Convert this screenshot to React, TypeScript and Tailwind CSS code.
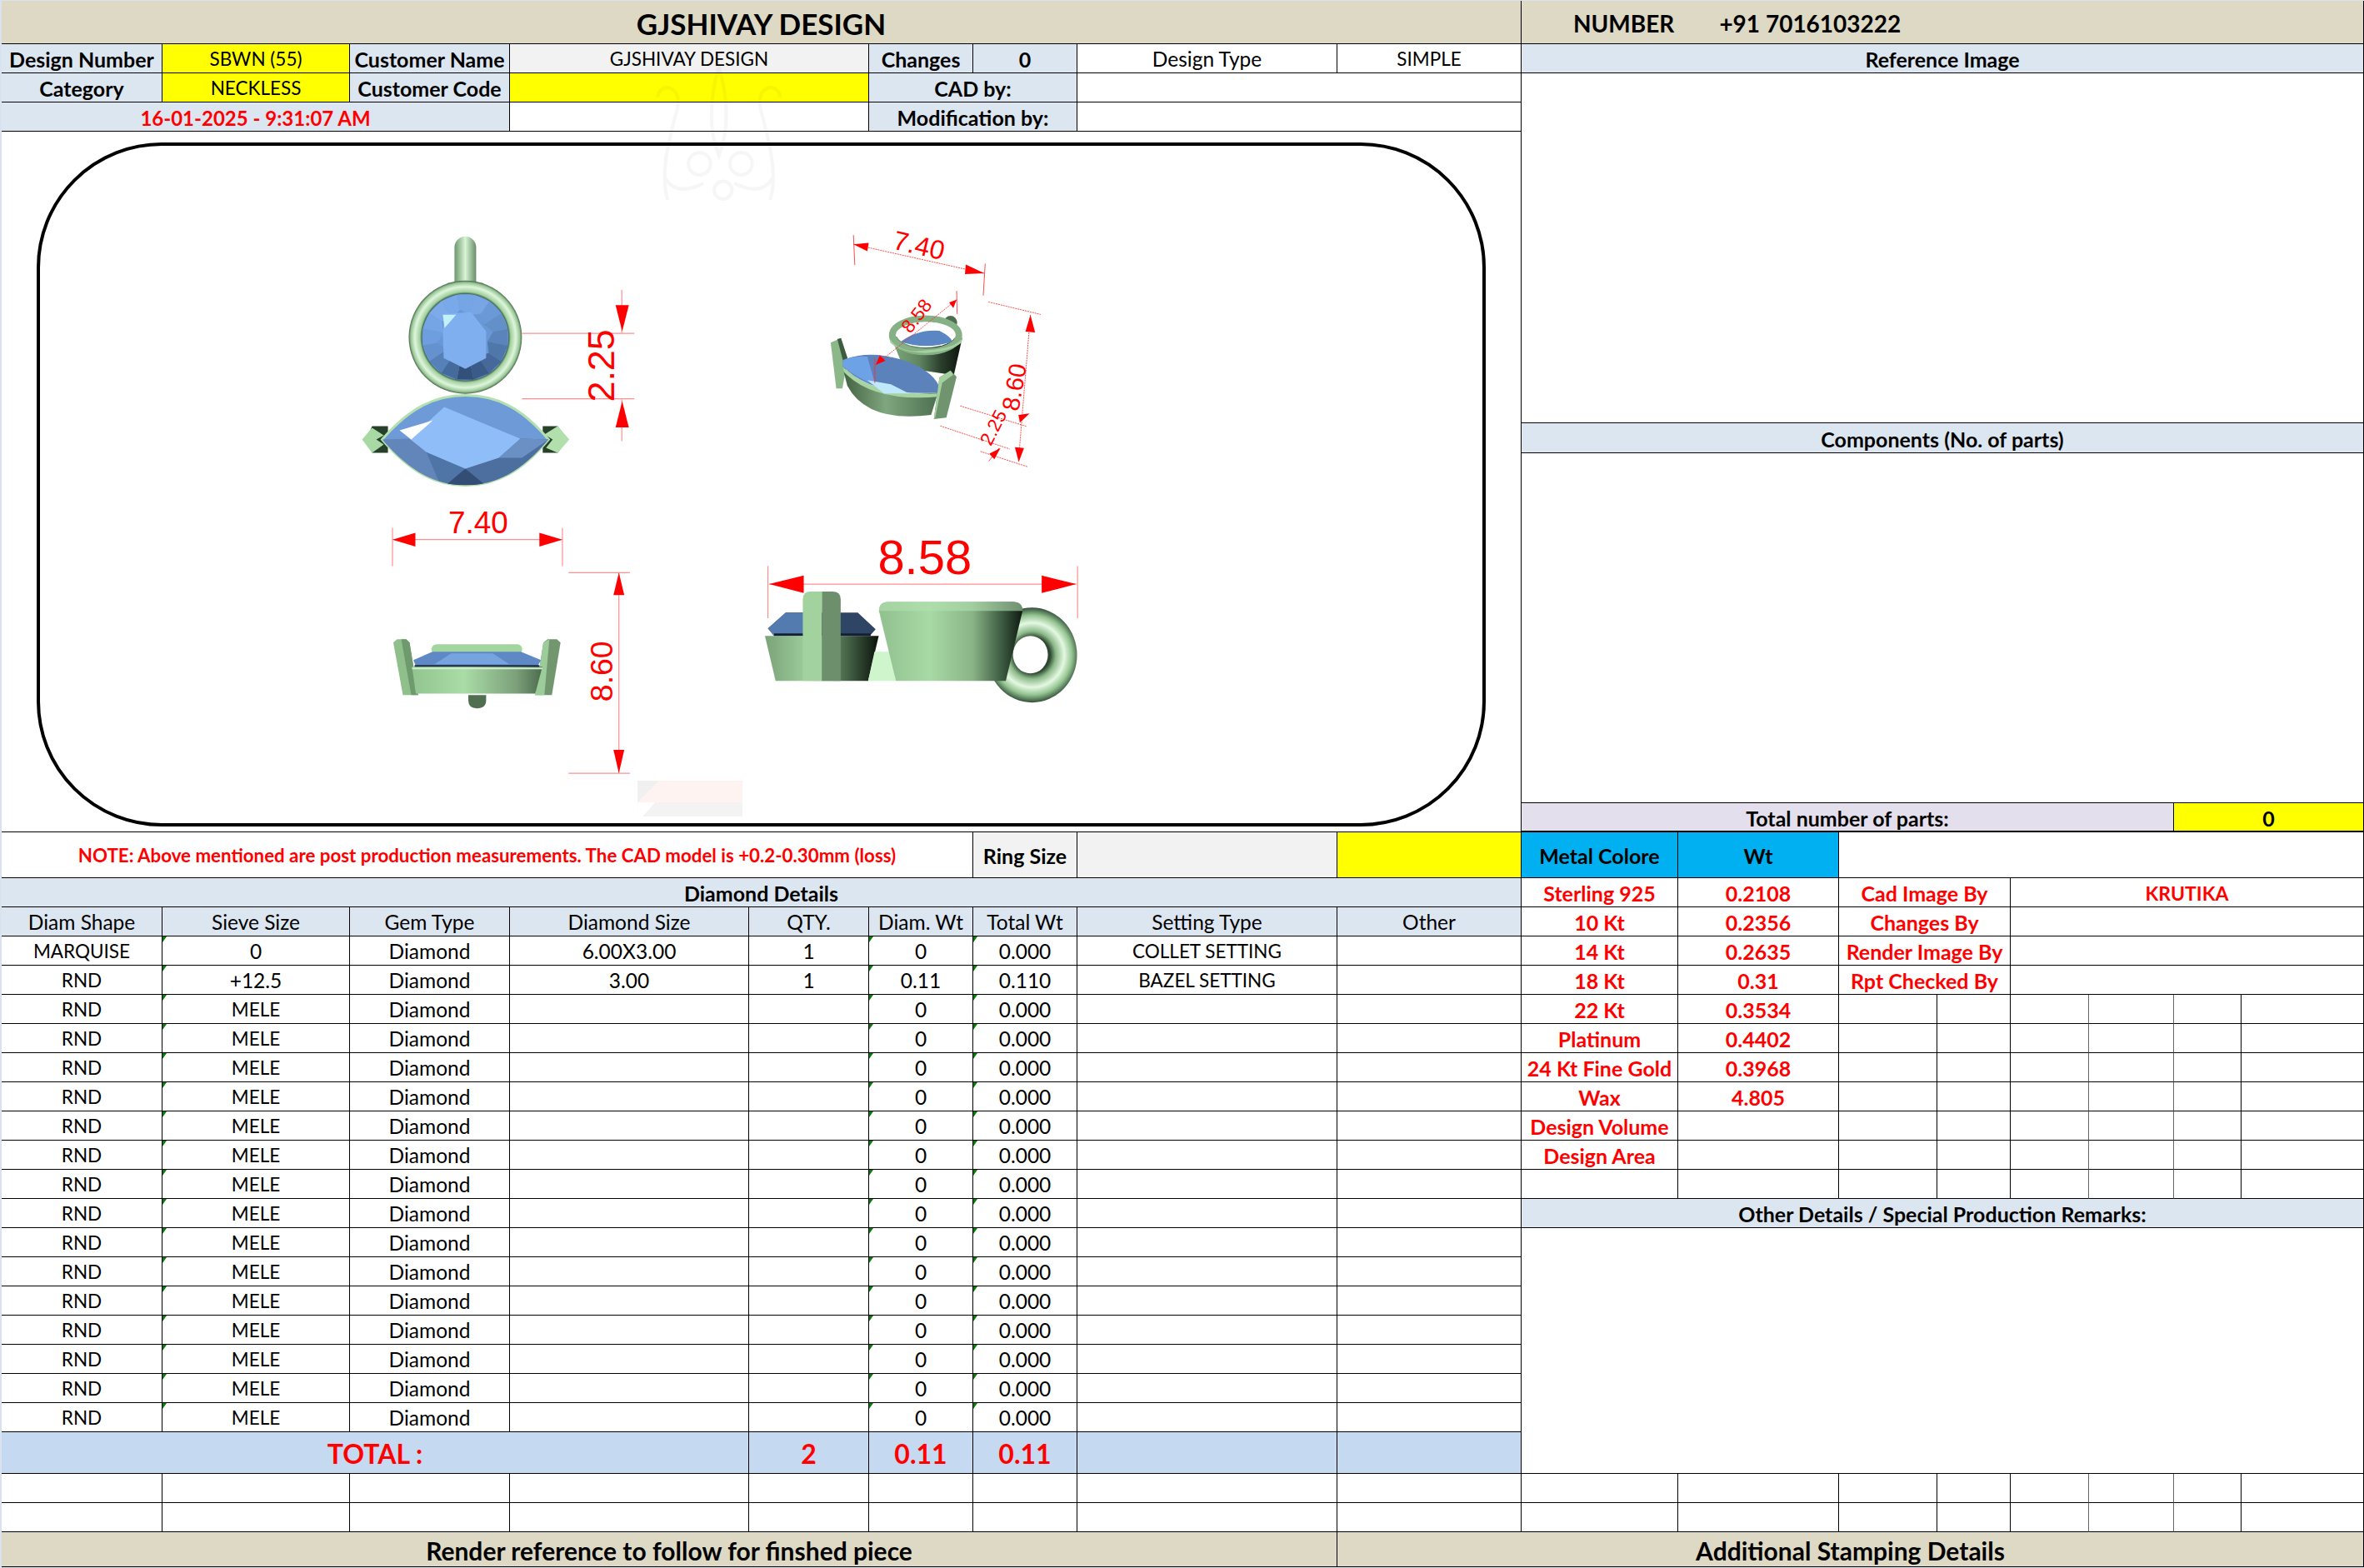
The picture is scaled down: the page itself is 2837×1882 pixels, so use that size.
import React from "react";

const BLUE = "bg-[#dce6f1]";
const CELL = "relative flex items-center justify-center overflow-hidden whitespace-nowrap border-r border-b border-black pt-[3px] leading-none";

type CellProps = { span?: string; bg?: string; text?: string; flag?: boolean; children?: React.ReactNode };

function Flag() {
  return <span className="absolute left-0 top-0 h-0 w-0 border-t-[7px] border-r-[5px] border-t-[#0b7a0b] border-r-transparent" />;
}

function Cell({ span = "", bg = "bg-white", text = "", flag, children }: CellProps) {
  return (
    <div className={`${CELL} ${span} ${bg} ${text}`}>
      {flag && <Flag />}
      {children}
    </div>
  );
}

const UP = "text-[22.5px]";
const B = "font-bold text-[25px]";
const RB = "font-bold text-[#ff0000] text-[25px]";
const TOTAL = "font-bold text-[#ff0000] text-[32px]";
const FOOT = "font-bold text-[30px]";

const metalRows: [string, string, string, string][] = [
  ["Sterling 925", "0.2108", "Cad Image By", "KRUTIKA"],
  ["10 Kt", "0.2356", "Changes By", ""],
  ["14 Kt", "0.2635", "Render Image By", ""],
  ["18 Kt", "0.31", "Rpt Checked By", ""],
  ["22 Kt", "0.3534", "", ""],
  ["Platinum", "0.4402", "", ""],
  ["24 Kt Fine Gold", "0.3968", "", ""],
  ["Wax", "4.805", "", ""],
  ["Design Volume", "", "", ""],
  ["Design Area", "", "", ""],
  ["", "", "", ""],
];

const diamondRows: [string, string, string, string, string, string, string][] = [
  ["MARQUISE", "0", "6.00X3.00", "1", "0", "0.000", "COLLET SETTING"],
  ["RND", "+12.5", "3.00", "1", "0.11", "0.110", "BAZEL SETTING"],
  ...Array.from({ length: 15 }, () => ["RND", "MELE", "", "", "0", "0.000", ""] as [string, string, string, string, string, string, string]),
];

function RightCells({ index }: { index: number }) {
  const m = metalRows[index];
  if (index < 4) {
    return (
      <>
        <Cell text={RB}>{m[0]}</Cell>
        <Cell text={RB}>{m[1]}</Cell>
        <Cell span="col-span-2" text={RB}>{m[2]}</Cell>
        <Cell span="col-span-4" text="font-bold text-[#ff0000] text-[23px]">{m[3]}</Cell>
      </>
    );
  }
  return (
    <>
      <Cell text={RB}>{m[0]}</Cell>
      <Cell text={RB}>{m[1]}</Cell>
      <Cell />
      <Cell />
      <Cell text="border-r-[#666]" />
      <Cell text="border-r-[#666]" />
      <Cell />
      <Cell />
    </>
  );
}

function round(cx: number, cy: number, r: number) {
  const shades = ["#78a6e4", "#6b98d6", "#6490ca", "#5a84bb", "#4f77a9", "#46689a", "#3a5a88", "#33507a", "#456a9c", "#5681b8", "#6592cf", "#6f9ee0", "#76a5e6", "#7dabe9", "#79a9e8", "#76a5e6"];
  const out: React.ReactNode[] = [];
  const pt = (a: number, rr: number) => `${cx + Math.cos(a) * rr},${cy + Math.sin(a) * rr}`;
  for (let i = 0; i < 16; i++) {
    const a0 = (i / 16) * Math.PI * 2 - Math.PI / 2 + 0.2;
    const a1 = ((i + 1) / 16) * Math.PI * 2 - Math.PI / 2 + 0.2;
    const inner = i % 2 === 0 ? 27 : 34;
    const innerNext = i % 2 === 0 ? 34 : 27;
    out.push(<polygon key={i} points={`${pt(a0, inner)} ${pt(a0, r)} ${pt(a1, r)} ${pt(a1, innerNext)}`} fill={shades[i]} />);
  }
  return out;
}

function Arrow({ points }: { points: string }) {
  return <polygon points={points} fill="#ff0000" />;
}

function Drawing() {
  const line = { stroke: "#ff8f8f", strokeWidth: 1.2 };
  const txt = { fill: "#ff0000", fontFamily: "'Liberation Sans', sans-serif" };
  const marq = "M457,528 C490,490 520,475 557,475 C595,475 625,490 657,528 C625,566 595,583 557,583 C520,583 490,566 457,528 Z";
  return (
    <svg viewBox="0 158 1825 841" className="absolute inset-0 h-full w-full overflow-visible">
      <defs>
        <linearGradient id="cup" x1="0" x2="1" y1="0" y2="0">
          <stop offset="0" stopColor="#90c08e" />
          <stop offset="0.35" stopColor="#a8daa5" />
          <stop offset="0.65" stopColor="#8ab587" />
          <stop offset="0.88" stopColor="#34503a" />
          <stop offset="1" stopColor="#0e1a10" />
        </linearGradient>
        <linearGradient id="cupLeft" x1="0" x2="1" y1="0" y2="0">
          <stop offset="0" stopColor="#7ba379" />
          <stop offset="0.35" stopColor="#9ccb99" />
          <stop offset="0.7" stopColor="#4b6b4c" />
          <stop offset="1" stopColor="#0a120b" />
        </linearGradient>
        <linearGradient id="base" x1="0" x2="1" y1="0" y2="0">
          <stop offset="0" stopColor="#92c48f" />
          <stop offset="0.4" stopColor="#a9dca6" />
          <stop offset="0.8" stopColor="#7ca07a" />
          <stop offset="1" stopColor="#4c6a4d" />
        </linearGradient>
        <linearGradient id="bail" x1="0" x2="1" y1="0" y2="0">
          <stop offset="0" stopColor="#6d976c" />
          <stop offset="0.5" stopColor="#d8f5d6" />
          <stop offset="1" stopColor="#668c66" />
        </linearGradient>
        <radialGradient id="ringTop" gradientUnits="userSpaceOnUse" cx="557" cy="405" r="69">
          <stop offset="0.75" stopColor="#33503a" />
          <stop offset="0.79" stopColor="#9fd09c" />
          <stop offset="0.88" stopColor="#dff5dc" />
          <stop offset="0.95" stopColor="#97c695" />
          <stop offset="1" stopColor="#2a3f2c" />
        </radialGradient>
        <radialGradient id="torus" gradientUnits="userSpaceOnUse" cx="1238" cy="787" r="57">
          <stop offset="0.38" stopColor="#2e4630" />
          <stop offset="0.5" stopColor="#8cba8a" />
          <stop offset="0.68" stopColor="#e4f8e2" />
          <stop offset="0.84" stopColor="#94c491" />
          <stop offset="1" stopColor="#33503a" />
        </radialGradient>
        <linearGradient id="isoBase" x1="0" x2="1" y1="0" y2="0">
          <stop offset="0" stopColor="#42603f" />
          <stop offset="0.45" stopColor="#7fa67e" />
          <stop offset="1" stopColor="#4d6f50" />
        </linearGradient>
        <linearGradient id="isoCup" x1="0" x2="1" y1="0" y2="0">
          <stop offset="0" stopColor="#7fa97e" />
          <stop offset="0.4" stopColor="#5f8560" />
          <stop offset="0.7" stopColor="#2b3f2c" />
          <stop offset="1" stopColor="#0a120b" />
        </linearGradient>
        <clipPath id="marq">
          <path d={marq} />
        </clipPath>
      </defs>

      {/* faint watermarks */}
      <g transform="translate(760,80) scale(0.3333)" opacity="0.03" fill="none" stroke="#000" strokeWidth="12">
        <path d="M120,480 C90,380 130,250 150,170 C170,110 150,80 120,75 C100,75 85,90 85,110" />
        <path d="M490,480 C520,380 480,250 460,170 C440,110 460,80 490,75 C510,75 525,90 525,110" />
        <path d="M305,0 C270,120 270,230 305,320 C340,230 340,120 305,0 Z" />
        <circle cx="235" cy="350" r="40" />
        <circle cx="385" cy="350" r="40" />
        <path d="M110,400 Q150,470 250,420 M500,400 Q460,470 360,420" />
        <circle cx="320" cy="445" r="32" />
      </g>
      <rect x="764" y="938" width="126" height="26" fill="#fff3f1" />
      <polygon points="764,938 790,938 764,964" fill="#f0f0f0" />
      <rect x="764" y="964" width="126" height="17" fill="#f3f3f3" />
      <polygon points="764,964 785,964 770,981 764,981" fill="#ffffff" />

      {/* top view */}
      <rect x="544" y="284" width="26" height="70" rx="13" fill="url(#bail)" />
      <circle cx="557" cy="405" r="68" fill="url(#ringTop)" />
      <circle cx="557" cy="405" r="52" fill="#6a98d6" />
      {round(557, 405, 52)}
      <polygon points="532,377 564,375 582,398 582,430 557,443 531,430 530,400" fill="#7fafee" />
      <polygon points="530,378 546,378 532,394" fill="#c3f1fb" />
      <polygon points="438,528 445,512 464,512 464,544 445,544" fill="#26402a" />
      <polygon points="433,528 445,514 459,523 450,528 459,534 445,544" fill="#a8d9a5" />
      <polygon points="680,528 668,512 650,512 650,544 668,544" fill="#26402a" />
      <polygon points="682,528 668,512 652,522 662,528 654,538 668,544" fill="#b2e0ad" />
      <path d={marq} fill="#6e9ad8" stroke="#b4e0b0" strokeWidth="3" />
      <g clipPath="url(#marq)">
        <polygon points="457,528 490,527 510,543 530,590 490,570" fill="#6286ba" />
        <polygon points="510,543 557,563 530,590" fill="#4f74a6" />
        <polygon points="557,563 597,550 623,527 657,528 620,575 580,590" fill="#4c6f9f" />
        <polygon points="557,563 590,590 525,590" fill="#344d74" />
        <polygon points="597,550 623,527 657,528 625,550" fill="#6a90c4" />
        <polygon points="531.7,489 623,527 597,550 557,563 510,543 490,527" fill="#8fbdf8" />
        <polygon points="478,517 518,505 492,528" fill="#ffffff" />
      </g>

      {/* top view dims */}
      <line x1="625" y1="400.5" x2="760" y2="400.5" {...line} />
      <line x1="625" y1="479" x2="760" y2="479" {...line} />
      <line x1="745" y1="348" x2="745" y2="400" {...line} />
      <line x1="745" y1="480" x2="745" y2="530" {...line} />
      <Arrow points="737.5,366.5 753.5,366.5 745.5,398" />
      <Arrow points="737.5,513.5 753.5,513.5 745.5,482" />
      <text transform="translate(736,483) rotate(-90)" fontSize="45" {...txt}>2.25</text>
      <line x1="469.5" y1="634" x2="469.5" y2="680" {...line} />
      <line x1="673.7" y1="634" x2="673.7" y2="680" {...line} />
      <line x1="470" y1="648.3" x2="673" y2="648.3" {...line} />
      <Arrow points="469.5,648.3 497,640 497,656.6" />
      <Arrow points="673.7,648.3 646,640 646,656.6" />
      <text x="572.5" y="641" textAnchor="middle" fontSize="37" {...txt}>7.40</text>

      {/* iso view */}
      <g transform="translate(940,250) scale(0.3333)">
        <path d="M385,462 L642,468 L612,602 L430,575 Z" fill="url(#isoCup)" />
        <circle cx="600" cy="412" r="24" fill="#4d6d4e" />
        <ellipse cx="510" cy="458" rx="120" ry="60" fill="none" stroke="#86b085" strokeWidth="24" />
        <ellipse cx="512" cy="456" rx="106" ry="46" fill="#fff" />
        <path d="M420,482 Q480,436 560,442 Q605,465 606,482 Q510,512 420,482 Z" fill="#5a86c4" />
        <path d="M380,470 Q420,528 515,512 Q620,505 642,468 L640,485 Q600,518 510,522 Q420,520 383,485 Z" fill="#a3d19f" />
        <polygon points="168,485 205,468 230,545 210,650 188,650" fill="#8cb889" />
        <polygon points="205,468 230,545 215,560 192,472" fill="#3e5c40" />
        <path d="M228,640 Q300,775 530,745 L555,665 Q330,690 210,570 Z" fill="url(#isoBase)" />
        <path d="M210,570 Q320,680 555,668 L555,680 Q320,700 215,590 Z" fill="#a6d5a2" />
        <path d="M212,548 Q300,510 420,545 Q530,580 558,640 L555,665 Q320,680 212,570 Z" fill="#5c82bb" />
        <path d="M212,548 Q250,530 300,535 L330,640 Q260,610 212,570 Z" fill="#6ea2e6" />
        <polygon points="300,620 385,635 450,668 360,668" fill="#bfe8fb" />
        <polygon points="560,610 600,585 622,608 585,755 540,760" fill="#6f946e" />
        <polygon points="560,610 600,585 610,600 570,630 545,755 540,760" fill="#a4cf9f" />
        <g stroke="#ff3030" strokeWidth="2.6" fill="none">
          <line x1="250" y1="130" x2="722" y2="235" strokeDasharray="6 3" />
          <line x1="250" y1="97" x2="255" y2="205" />
          <line x1="725" y1="200" x2="718" y2="315" />
          <line x1="622" y1="330" x2="330" y2="565" strokeDasharray="6 3" />
          <line x1="622" y1="298" x2="624" y2="382" />
          <line x1="327" y1="540" x2="327" y2="630" />
          <line x1="888" y1="385" x2="845" y2="910" strokeDasharray="6 3" />
          <line x1="737" y1="338" x2="925" y2="383" strokeDasharray="6 3" />
          <line x1="635" y1="713" x2="875" y2="787" strokeDasharray="6 3" />
          <line x1="563" y1="785" x2="813" y2="868" strokeDasharray="6 3" />
          <line x1="708" y1="877" x2="877" y2="932" strokeDasharray="6 3" />
          <line x1="775" y1="865" x2="738" y2="912" />
        </g>
        <Arrow points="250,130 305,125 300,155" />
        <Arrow points="722,235 655,203 652,238" />
        <Arrow points="622,330 595,340 610,360" />
        <Arrow points="330,565 345,530 365,550" />
        <Arrow points="888,385 870,445 905,448" />
        <Arrow points="850,773 845,745 885,740" />
        <Arrow points="846,915 832,862 865,865" />
        <Arrow points="780,865 740,885 758,905" />
        <text transform="translate(388,145) rotate(13)" fontSize="96" {...txt}>7.40</text>
        <text transform="translate(455,455) rotate(-52)" fontSize="68" {...txt}>8.58</text>
        <text transform="translate(845,735) rotate(-80)" fontSize="88" {...txt}>8.60</text>
        <text transform="translate(745,860) rotate(-63)" fontSize="68" {...txt}>2.25</text>
      </g>

      {/* front view */}
      <polygon points="470.5,772 475,768 486,768 490,772 500.4,835 482,835" fill="#8fc08c" />
      <polygon points="480,768 486,768 490,772 500.4,835 492,835" fill="#6f9a6d" />
      <polygon points="650.8,772 656,768 667,768 671.4,772 661,835 641,835" fill="#72976f" />
      <polygon points="650.8,772 658,768 652,835 641,835" fill="#9ccc99" />
      <path d="M560.6,835 H582 V841 Q582,851 571,851 Q560.6,851 560.6,841 Z" fill="#4f6f50" />
      <rect x="516.4" y="774" width="109" height="12" rx="6" fill="#a3d5a0" />
      <polygon points="494.6,793 517.6,783 623.8,783 648,793 644,800 497.5,800" fill="#5f89c4" />
      <polygon points="540,785 590,785 610,798 520,798" fill="#76a4df" />
      <rect x="496" y="799" width="150" height="3" fill="#1d2b44" />
      <polygon points="493,801 649.6,801 641,833.3 497.5,833.3" fill="url(#base)" />
      <line x1="493" y1="803" x2="649.6" y2="803" stroke="#cfeecb" strokeWidth="2" />
      <line x1="681" y1="688" x2="754.7" y2="688" {...line} />
      <line x1="681" y1="929" x2="754.7" y2="929" {...line} />
      <line x1="741.5" y1="688" x2="741.5" y2="929" {...line} />
      <Arrow points="741.5,688 735,715 748,715" />
      <Arrow points="741.5,929 735,901 748,901" />
      <text transform="translate(734,843) rotate(-90)" fontSize="37.5" {...txt}>8.60</text>

      {/* side view */}
      <path fillRule="evenodd" d="M1238,730 a54,57 0 1,1 0,114 a54,57 0 1,1 0,-114 Z M1236,764 a21,22.5 0 1,0 0,45 a21,22.5 0 1,0 0,-45 Z" fill="url(#torus)" />
      <polygon points="942,736 1028.5,736 1050,756 1043,764 928,764 920.6,755" fill="#2f4566" />
      <polygon points="942,736 985,736 975,764 928,764 920.6,755" fill="#537bb0" />
      <rect x="928" y="761" width="116" height="3" fill="#141f33" />
      <polygon points="917,764 1053.7,764 1041,818 929.8,818" fill="url(#cupLeft)" />
      <polygon points="1048.6,783 1067.5,783 1074.4,818 1041,818" fill="#cff5cd" />
      <path d="M1054,734 Q1054,723 1066,723 H1214 Q1226.5,723 1226.5,734 L1206.4,818 H1074.4 Z" fill="url(#cup)" />
      <path d="M1054,734 Q1054,723 1066,723 H1214 Q1226.5,723 1226.5,734 Z" fill="#b3e0af" opacity="0.6" />
      <path d="M962.5,720 Q962.5,710.7 972,710.7 H985.5 V818 H962.5 Z" fill="#a2d29e" />
      <path d="M985.5,710.7 H998 Q1008,710.7 1008,720 V818 H985.5 Z" fill="#6d8f6c" />
      <line x1="920.6" y1="680" x2="920.6" y2="742.7" {...line} />
      <line x1="1292.6" y1="680" x2="1292.6" y2="742.7" {...line} />
      <line x1="922" y1="701.7" x2="1291" y2="701.7" {...line} />
      <Arrow points="922,701.7 963.6,691.5 963.6,712.5" />
      <Arrow points="1291,701.7 1249.5,691.5 1249.5,712.5" />
      <text x="1109" y="690" textAnchor="middle" fontSize="58" {...txt}>8.58</text>
    </svg>
  );
}

export default function App() {
  return (
    <div className="box-border h-[1882px] w-[2837px] overflow-hidden border-l-2 border-t border-[#d9e2ee] bg-[#d9e2ee] font-['Lato','Liberation_Sans',sans-serif] text-[24.5px] text-black">
      <div className="grid w-[2835px] grid-cols-[193px_225px_192px_287px_144px_125px_125px_312px_221px_188px_193px_118px_88px_94px_102px_81px_147px] grid-rows-[52px_35px_35px_35px_350px_36px_420px_35px_55px_repeat(19,35px)_50px_35px_35px_42px]">
        {/* title */}
        <Cell span="col-span-9" bg="bg-[#ddd9c4]" text="font-bold text-[35px]">GJSHIVAY DESIGN</Cell>
        <Cell span="col-span-8" bg="bg-[#ddd9c4]" text="justify-start gap-[54px] pl-[62px] font-bold text-[28px]">
          <span>NUMBER</span>
          <span>+91 7016103222</span>
        </Cell>

        {/* row 1 */}
        <Cell bg={BLUE} text={B}>Design Number</Cell>
        <Cell bg="bg-[#ffff00]" text={UP}>SBWN (55)</Cell>
        <Cell bg={BLUE} text={B}>Customer Name</Cell>
        <Cell span="col-span-2" bg="bg-[#f2f2f2]" text={UP}>GJSHIVAY DESIGN</Cell>
        <Cell bg={BLUE} text={B}>Changes</Cell>
        <Cell bg={BLUE} text={B}>0</Cell>
        <Cell>Design Type</Cell>
        <Cell text={UP}>SIMPLE</Cell>
        <Cell span="col-span-8" bg={BLUE} text={B}>Reference Image</Cell>

        {/* row 2 */}
        <Cell bg={BLUE} text={B}>Category</Cell>
        <Cell bg="bg-[#ffff00]" text={UP}>NECKLESS</Cell>
        <Cell bg={BLUE} text={B}>Customer Code</Cell>
        <Cell span="col-span-2" bg="bg-[#ffff00]" />
        <Cell span="col-span-2" bg={BLUE} text={B}>CAD by:</Cell>
        <Cell span="col-span-2" />
        <Cell span="col-span-8 row-span-3" />

        {/* row 3 */}
        <Cell span="col-span-3" bg={BLUE} text="font-bold text-[#ff0000] text-[24px]">16-01-2025 - 9:31:07 AM</Cell>
        <Cell span="col-span-2" />
        <Cell span="col-span-2" bg={BLUE} text={B}>Modification by:</Cell>
        <Cell span="col-span-2" />

        {/* image */}
        <div className="relative col-span-9 row-span-4 border-r border-b border-black bg-white">
          <div className="absolute left-[42px] right-[42px] top-[13px] bottom-[6px] rounded-[150px] border-[4px] border-black" />
          <Drawing />
        </div>
        <Cell span="col-span-8" bg={BLUE} text={B}>Components (No. of parts)</Cell>
        <Cell span="col-span-8" />
        <Cell span="col-span-6" bg="bg-[#e4dfec]" text={`${B} border-b-2`}>Total number of parts:</Cell>
        <Cell span="col-span-2" bg="bg-[#ffff00]" text={`${B} border-b-2`}>0</Cell>

        {/* note row */}
        <Cell span="col-span-6" text="font-bold text-[#ff0000] text-[22.3px]">
          NOTE: Above mentioned are post production measurements. The CAD model is +0.2-0.30mm (loss)
        </Cell>
        <Cell bg="bg-[#f2f2f2]" text={B}>Ring Size</Cell>
        <Cell bg="bg-[#f2f2f2]" />
        <Cell bg="bg-[#ffff00]" />
        <Cell bg="bg-[#00b0f0]" text={B}>Metal Colore</Cell>
        <Cell bg="bg-[#00b0f0]" text={B}>Wt</Cell>
        <Cell span="col-span-6" />

        {/* diamond header */}
        <Cell span="col-span-9" bg={BLUE} text={B}>Diamond Details</Cell>
        <RightCells index={0} />
        {["Diam Shape", "Sieve Size", "Gem Type", "Diamond Size", "QTY.", "Diam. Wt", "Total Wt", "Setting Type", "Other"].map((h) => (
          <Cell key={h} bg={BLUE}>{h}</Cell>
        ))}
        <RightCells index={1} />

        {/* diamond rows */}
        {diamondRows.map((r, i) => (
          <React.Fragment key={i}>
            <Cell text={UP}>{r[0]}</Cell>
            <Cell flag text={r[1] === "MELE" ? UP : ""}>{r[1]}</Cell>
            <Cell>Diamond</Cell>
            <Cell>{r[2]}</Cell>
            <Cell>{r[3]}</Cell>
            <Cell flag>{r[4]}</Cell>
            <Cell flag>{r[5]}</Cell>
            <Cell text={UP}>{r[6]}</Cell>
            <Cell />
            {i + 2 < 11 && <RightCells index={i + 2} />}
            {i + 2 === 11 && <Cell span="col-span-8" bg={BLUE} text={B}>Other Details / Special Production Remarks:</Cell>}
            {i + 2 === 12 && <Cell span="col-span-8 row-span-8" />}
          </React.Fragment>
        ))}

        {/* totals */}
        <Cell span="col-span-4" bg="bg-[#c5d9f1]" text={TOTAL}>TOTAL :</Cell>
        <Cell bg="bg-[#c5d9f1]" text={TOTAL}>2</Cell>
        <Cell bg="bg-[#c5d9f1]" text={TOTAL}>0.11</Cell>
        <Cell bg="bg-[#c5d9f1]" text={TOTAL}>0.11</Cell>
        <Cell bg="bg-[#c5d9f1]" />
        <Cell bg="bg-[#c5d9f1]" />

        {/* blank rows */}
        {[0, 1].map((row) => (
          <React.Fragment key={row}>
            <Cell /><Cell /><Cell /><Cell /><Cell /><Cell /><Cell /><Cell /><Cell />
            <Cell /><Cell /><Cell /><Cell />
            <Cell text="border-r-[#666]" />
            <Cell text="border-r-[#666]" />
            <Cell /><Cell />
          </React.Fragment>
        ))}

        {/* footer */}
        <Cell span="col-span-8" bg="bg-[#ddd9c4]" text={FOOT}>Render reference to follow for finshed piece</Cell>
        <Cell span="col-span-9" bg="bg-[#ddd9c4]" text={FOOT}>Additional Stamping Details</Cell>
      </div>
    </div>
  );
}
